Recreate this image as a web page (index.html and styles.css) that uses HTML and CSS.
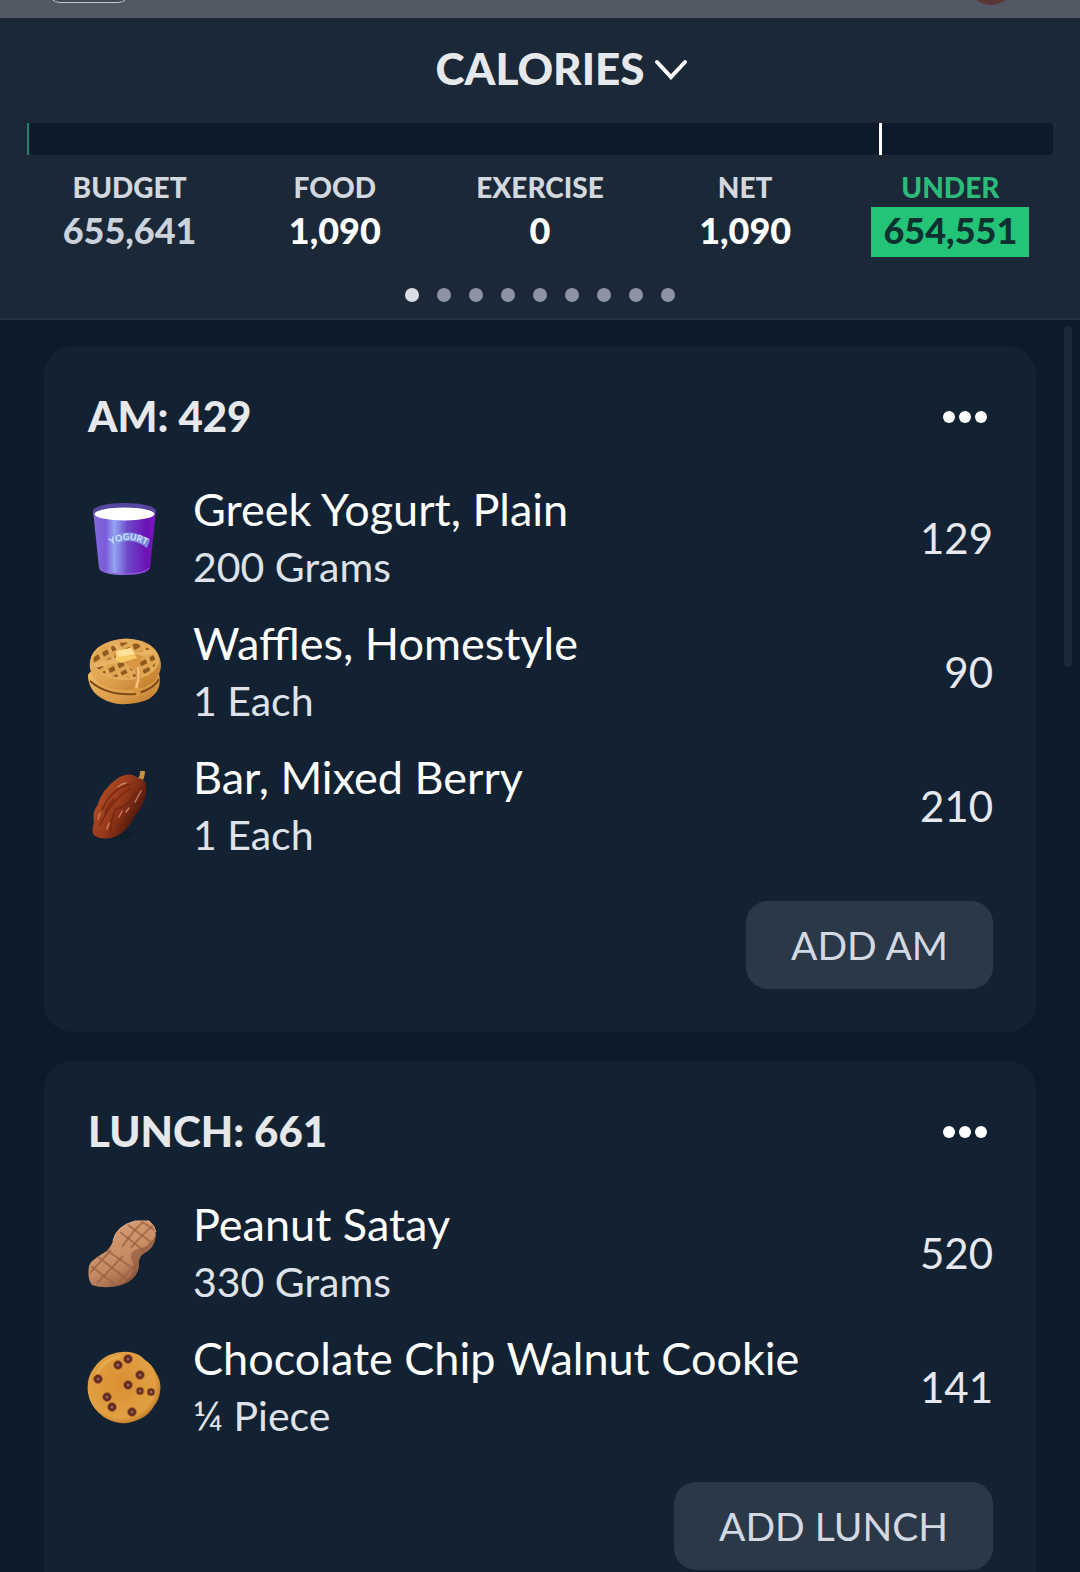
FILE: index.html
```html
<!DOCTYPE html>
<html lang="en">
<head>
    <meta charset="UTF-8">
    <meta name="viewport" content="width=device-width, initial-scale=1.0">
    <title>Calories</title>
    <link rel="stylesheet" href="styles.css">
</head>
<body>
    <div class="topbar">
        <span class="topbar-pill"></span>
        <span class="topbar-avatar"></span>
    </div>

    <header class="summary">
        <h1>
            <button type="button" class="summary-title">
                CALORIES
                <svg class="chevron" viewBox="0 0 34 28" aria-hidden="true">
                    <path d="M3 8 L17 23 L31 8" fill="none" stroke="#fff" stroke-width="4" stroke-linecap="round"/>
                </svg>
            </button>
        </h1>
        <div class="bar">
            <span class="bar-fill"></span>
            <span class="bar-rest"></span>
            <span class="bar-mark"></span>
        </div>
        <dl class="stats">
            <div class="stat budget"><dt>BUDGET</dt><dd>655,641</dd></div>
            <div class="stat"><dt>FOOD</dt><dd>1,090</dd></div>
            <div class="stat"><dt>EXERCISE</dt><dd>0</dd></div>
            <div class="stat"><dt>NET</dt><dd>1,090</dd></div>
            <div class="stat under"><dt>UNDER</dt><dd>654,551</dd></div>
        </dl>
        <nav class="pager" aria-label="Pages">
            <button type="button" class="dot active" aria-label="Page 1"></button>
            <button type="button" class="dot" aria-label="Page 2"></button>
            <button type="button" class="dot" aria-label="Page 3"></button>
            <button type="button" class="dot" aria-label="Page 4"></button>
            <button type="button" class="dot" aria-label="Page 5"></button>
            <button type="button" class="dot" aria-label="Page 6"></button>
            <button type="button" class="dot" aria-label="Page 7"></button>
            <button type="button" class="dot" aria-label="Page 8"></button>
            <button type="button" class="dot" aria-label="Page 9"></button>
        </nav>
    </header>

    <main class="log">
        <span class="scrollbar"></span>

        <section class="card">
            <div class="card-header">
                <h2>AM: 429</h2>
                <button type="button" class="more" aria-label="More options">
                    <svg viewBox="0 0 44 12"><circle cx="6" cy="6" r="6"/><circle cx="22" cy="6" r="6"/><circle cx="38" cy="6" r="6"/></svg>
                </button>
            </div>
            <ul class="foods">
                <li class="food">
                    <!-- yogurt cup -->
                    <svg class="food-icon" viewBox="0 0 74 74" aria-hidden="true">
                        <defs>
                            <linearGradient id="cup" x1="0" x2="1">
                                <stop offset="0" stop-color="#8567dd"/>
                                <stop offset=".2" stop-color="#7a5cd8"/>
                                <stop offset=".34" stop-color="#93a4f2"/>
                                <stop offset=".55" stop-color="#6e48c8"/>
                                <stop offset=".85" stop-color="#6a12b4"/>
                                <stop offset="1" stop-color="#7a18c0"/>
                            </linearGradient>
                        </defs>
                        <path d="M6 8 L12 66 Q14 73 38 73 Q61 73 63 66 L69 8Z" fill="url(#cup)"/>
                        <path d="M13 66 Q18 72 38 72 Q58 72 62 66" fill="none" stroke="#9a5fdc" stroke-width="1"/>
                        <ellipse cx="37.500" cy="9" rx="31.500" ry="8" fill="#5745a0"/>
                        <ellipse cx="37.500" cy="12" rx="30" ry="6.500" fill="#fff"/>
                        <path d="M24 36 Q43 24 63 38 L60 46 Q43 33 27 44Z" fill="#7f9cea" opacity=".85"/>
                        <path id="label" d="M24 43 Q43 32 63 45" fill="none"/>
                        <text class="cup-label"><textPath href="#label">YOGURT</textPath></text>
                    </svg>
                    <div class="food-text">
                        <div class="food-name">Greek Yogurt, Plain</div>
                        <div class="food-amount">200 Grams</div>
                    </div>
                    <div class="food-calories">129</div>
                </li>
                <li class="food">
                    <!-- waffles -->
                    <svg class="food-icon" viewBox="0 0 74 74" aria-hidden="true">
                        <defs>
                            <linearGradient id="waffle" x1="0" y1="0" x2="1" y2="1">
                                <stop offset="0" stop-color="#f0bd69"/>
                                <stop offset=".6" stop-color="#dc9d49"/>
                                <stop offset="1" stop-color="#b97427"/>
                            </linearGradient>
                            <clipPath id="waffle-top"><ellipse cx="38" cy="24" rx="34" ry="20"/></clipPath>
                        </defs>
                        <path d="M1 42 Q0 36 7 35 L72 38 Q76 54 62 63 Q50 69 31 68 Q4 63 1 42Z" fill="url(#waffle)"/>
                        <path d="M3 45 Q20 60 48 58 Q67 53 72 43" fill="none" stroke="#7d4a17" stroke-width="2"/>
                        <path d="M3 25 Q6 11 24 5 Q39 0 55 5 Q72 11 74 28 Q74 44 58 51 Q38 58 16 50 Q1 41 3 25Z" fill="url(#waffle)"/>
                        <g clip-path="url(#waffle-top)">
                            <ellipse cx="38" cy="24" rx="34" ry="20" fill="#8f5a1e"/>
                            <path d="M-2 24 L36 2 M-2 34 L60 -2 M4 40 L74 2 M10 46 L78 11 M22 48 L80 20 M36 50 L82 30" stroke="#dfa553" stroke-width="4"/>
                            <path d="M9 6 L25 48 M18 2 L36 48 M28 0 L47 48 M40 0 L58 46 M51 0 L68 40 M61 4 L76 34" stroke="#e3aa58" stroke-width="4"/>
                            <path d="M2 31 L74 13 M24 2 L58 47" stroke="#e9b365" stroke-width="5"/>
                            <ellipse cx="38" cy="24" rx="33" ry="19" fill="none" stroke="#e6ae5c" stroke-width="3"/>
                        </g>
                        <path d="M25 18 Q39 14 55 20 Q52 28 54 35 Q55 42 52 48 Q51 51 54 57 Q50 64 48 55 Q46 50 49 43 Q50 34 39 28Z" fill="#dc9542"/>
                        <path d="M51 31 Q53 41 49 52" fill="none" stroke="#f7c986" stroke-width="2"/>
                        <path d="M29 15 L44 12 L50 22 L34 27 L29 24Z" fill="#f7c963"/>
                        <path d="M29 15 L44 12 L48 18 L32 21Z" fill="#ffe297"/>
                    </svg>
                    <div class="food-text">
                        <div class="food-name">Waffles, Homestyle</div>
                        <div class="food-amount">1 Each</div>
                    </div>
                    <div class="food-calories">90</div>
                </li>
                <li class="food">
                    <!-- date fruit -->
                    <svg class="food-icon" viewBox="0 0 74 74" aria-hidden="true">
                        <defs>
                            <linearGradient id="date" x1=".1" y1=".2" x2=".9" y2=".7">
                                <stop offset="0" stop-color="#b14f27"/>
                                <stop offset=".5" stop-color="#96391a"/>
                                <stop offset="1" stop-color="#431108"/>
                            </linearGradient>
                        </defs>
                        <ellipse cx="32" cy="65" rx="14" ry="4" fill="#0c1621" opacity=".5"/>
                        <path d="M49 10 Q54 6 53 1 L58 1 Q58 8 54 13Z" fill="#c7923e"/>
                        <path d="M31 8 Q43 1 51 8 Q61 9 59 22 Q57 36 48 46 Q39 63 28 67 Q14 71 7 65 Q4 61 7 52 Q5 42 10 36 Q15 19 31 8Z" fill="url(#date)"/>
                        <path d="M45 14 Q25 17 15 40 M44 18 Q25 29 13 55 M49 22 Q42 36 29 39 Q23 50 24 62 M27 29 Q21 35 18 43" fill="none" stroke="#702410" stroke-width="2" opacity=".7"/>
                        <path d="M54 21 L48 32 M35 41 L32 47 M42 38 L39 42 M22 53 L20 59 M13 43 L11 49 M39 13 Q34 14 31 17" fill="none" stroke="#d98a68" stroke-width="1.500" stroke-linecap="round" opacity=".8"/>
                    </svg>
                    <div class="food-text">
                        <div class="food-name">Bar, Mixed Berry</div>
                        <div class="food-amount">1 Each</div>
                    </div>
                    <div class="food-calories">210</div>
                </li>
            </ul>
            <button type="button" class="add">ADD AM</button>
        </section>

        <section class="card">
            <div class="card-header">
                <h2>LUNCH: 661</h2>
                <button type="button" class="more" aria-label="More options">
                    <svg viewBox="0 0 44 12"><circle cx="6" cy="6" r="6"/><circle cx="22" cy="6" r="6"/><circle cx="38" cy="6" r="6"/></svg>
                </button>
            </div>
            <ul class="foods">
                <li class="food">
                    <!-- peanut -->
                    <svg class="food-icon" viewBox="0 0 74 74" aria-hidden="true">
                        <defs>
                            <linearGradient id="nut" x1=".2" y1="0" x2=".7" y2="1">
                                <stop offset="0" stop-color="#dba47c"/>
                                <stop offset=".6" stop-color="#c58a62"/>
                                <stop offset="1" stop-color="#865039"/>
                            </linearGradient>
                            <clipPath id="nut-shape">
                                <path d="M48 4 L62 4 Q71 11 68 23 Q66 32 56 37 Q51 41 52 49 Q50 62 37 67 Q19 73 5 68 Q0 62 2 49 Q3 44 15 37 Q23 33 26 24 Q29 9 48 4Z"/>
                            </clipPath>
                        </defs>
                        <g clip-path="url(#nut-shape)">
                            <rect width="74" height="74" fill="url(#nut)"/>
                            <path d="M69 14 Q67 29 51 32 Q39 36 47 47 Q47 60 31 70 L65 68 L74 14Z" fill="#7d4a34" opacity=".5"/>
                            <path d="M41 8 L72 31 M33 15 L60 36 M18 32 L51 55 M11 40 L41 63 M4 49 L31 70 M54 4 L72 16" stroke="#9a6244" stroke-width="2" opacity=".75"/>
                            <path d="M56 5 Q45 15 35 30 M66 9 Q55 17 44 31 M69 21 L55 35 M49 47 L28 70 M36 39 L10 66 M24 33 L3 56" fill="none" stroke="#9a6244" stroke-width="2" opacity=".75"/>
                        </g>
                        <path d="M26 24 Q29 9 48 4 L62 4 Q68 9 69 15" fill="none" stroke="#e0aa84" stroke-width="1"/>
                    </svg>
                    <div class="food-text">
                        <div class="food-name">Peanut Satay</div>
                        <div class="food-amount">330 Grams</div>
                    </div>
                    <div class="food-calories">520</div>
                </li>
                <li class="food">
                    <!-- chocolate chip cookie -->
                    <svg class="food-icon" viewBox="0 0 74 74" aria-hidden="true">
                        <defs>
                            <radialGradient id="cookie" cx=".45" cy=".45" r=".56">
                                <stop offset="0" stop-color="#d98f32"/>
                                <stop offset=".85" stop-color="#e1a042"/>
                                <stop offset="1" stop-color="#c47c28"/>
                            </radialGradient>
                        </defs>
                        <path d="M22 4 Q32 0 42 1 Q52 2 58 9 Q65 13 69 22 Q75 31 73 41 Q72 49 67 55 Q62 64 53 68 Q43 73 33 72 Q20 70 12 62 Q3 54 1 42 Q-1 27 7 17 Q13 8 22 4Z" fill="url(#cookie)"/>
                        <path d="M9 25 Q16 8 34 5" fill="none" stroke="#efb75b" stroke-width="3" opacity=".5"/>
                        <g fill="#602b23" stroke="#b9702b" stroke-width="1">
                            <circle cx="31" cy="14" r="4.500"/><circle cx="41" cy="8" r="4.500"/><circle cx="11" cy="28" r="4.500"/>
                            <circle cx="53" cy="24" r="4.500"/><circle cx="41" cy="34" r="4.500"/><circle cx="53" cy="40" r="4"/>
                            <circle cx="64" cy="41" r="4"/><circle cx="20" cy="46" r="4.500"/><circle cx="25" cy="56" r="4.500"/>
                            <circle cx="45" cy="61" r="4.500"/>
                        </g>
                        <g fill="#9c655c">
                            <circle cx="31" cy="14" r="1.500"/><circle cx="41" cy="8" r="1.500"/><circle cx="11" cy="28" r="1.500"/>
                            <circle cx="53" cy="24" r="1.500"/><circle cx="41" cy="34" r="1.500"/><circle cx="53" cy="40" r="1.500"/>
                            <circle cx="64" cy="41" r="1.500"/><circle cx="20" cy="46" r="1.500"/><circle cx="25" cy="56" r="1.500"/>
                            <circle cx="45" cy="61" r="1.500"/>
                        </g>
                    </svg>
                    <div class="food-text">
                        <div class="food-name">Chocolate Chip Walnut Cookie</div>
                        <div class="food-amount">¼ Piece</div>
                    </div>
                    <div class="food-calories">141</div>
                </li>
            </ul>
            <button type="button" class="add">ADD LUNCH</button>
        </section>
    </main>
</body>
</html>
```

FILE: styles.css
```css
* {
    box-sizing: border-box;
}
body {
    display: flex;
    flex-direction: column;
    height: 100vh;
    margin: 0;
    overflow: hidden;
    background-color: #0d1a29;
    color: #fff;
    font-family: Lato, "Liberation Sans", sans-serif;
}
h1, h2, ul, dl, dd {
    margin: 0;
    padding: 0;
}
button {
    padding: 0;
    border: none;
    background: none;
    color: inherit;
    font-family: inherit;
    cursor: pointer;
}

/* bottom edge of the navigation bar */
.topbar {
    display: flex;
    flex-shrink: 0;
    justify-content: space-between;
    align-items: flex-end;
    height: 18px;
    padding: 0 66px 13px 48px;
    overflow: hidden;
    background-color: #525965;
}
.topbar-pill {
    width: 82px;
    height: 40px;
    margin-bottom: 2px;
    border: 1px solid #c5c9d0;
    border-radius: 12px;
    background-color: #424a57;
}
.topbar-avatar {
    width: 46px;
    height: 46px;
    border-radius: 50%;
    background-color: #5b3635;
}

.summary {
    flex-shrink: 0;
    padding: 22px 27px 16px;
    border-bottom: 2px solid #263341;
    background-color: #1a2838;
}
h1 {
    display: flex;
    justify-content: center;
    padding-left: 44px;
}
.summary-title {
    display: flex;
    align-items: center;
    gap: 10px;
    color: #e6e8eb;
    font-size: 44px;
    font-weight: 900;
    line-height: 56px;
}
.chevron {
    width: 34px;
    height: 28px;
}
.bar {
    position: relative;
    display: flex;
    height: 32px;
    margin-top: 27px;
}
.bar-fill {
    width: 2px;
    background-color: #238567;
}
.bar-rest {
    flex: 1;
    border-radius: 4px;
    background-color: #0d1a29;
}
.bar-mark {
    position: absolute;
    left: 83%;
    width: 3px;
    height: 100%;
    background-color: #fff;
}
.stats {
    display: grid;
    grid-template-columns: repeat(5, 1fr);
    margin-top: 16px;
    text-align: center;
}
.stat {
    display: flex;
    flex-direction: column;
    align-items: center;
}
.stat dt {
    color: #d3d7de;
    font-size: 28px;
    font-weight: 900;
    line-height: 32px;
}
.stat dd {
    margin-top: 4px;
    padding: 0 12px 4px;
    font-size: 36px;
    font-weight: 900;
    line-height: 46px;
}
.budget dd {
    color: #ccd2db;
}
.under dt {
    color: #2dbb7a;
}
.under dd {
    background-color: #23c378;
    color: #0d3130;
}
.pager {
    display: flex;
    justify-content: center;
    gap: 18px;
    margin-top: 31px;
}
.dot {
    width: 14px;
    height: 14px;
    border-radius: 50%;
    background-color: #8c94a1;
}
.dot.active {
    background-color: #dadde3;
}

.log {
    position: relative;
    flex: 1;
    min-height: 0;
    padding: 26px 44px;
    overflow: hidden;
}
.scrollbar {
    position: absolute;
    top: 6px;
    right: 8px;
    width: 8px;
    height: 341px;
    border-radius: 4px;
    background-color: #1c2938;
}
.card {
    display: flex;
    flex-direction: column;
    margin-bottom: 29px;
    padding: 44px 43px 43px;
    border-radius: 28px;
    background-color: #132232;
}
.card-header {
    display: flex;
    justify-content: space-between;
    align-items: center;
    height: 54px;
    margin-bottom: 27px;
    padding: 0 6px 0 1px;
}
h2 {
    padding-bottom: 2px;
    color: #e6e8eb;
    font-size: 42px;
    font-weight: 900;
    line-height: 50px;
}
.more svg {
    display: block;
    width: 44px;
    height: 12px;
    fill: #fff;
}
.foods {
    list-style: none;
}
.food {
    display: flex;
    align-items: center;
    height: 134px;
}
.food-icon {
    flex-shrink: 0;
    width: 74px;
    height: 74px;
    margin: 2px 32px 0 0;
}
.cup-label {
    fill: #d6e4ff;
    font-size: 9px;
    font-weight: bold;
}
.food-text {
    flex: 1;
}
.food-name {
    font-size: 45px;
    line-height: 58px;
}
.food-amount {
    color: #dfe3e9;
    font-size: 41px;
    line-height: 58px;
}
.food-calories {
    color: #e6e8ee;
    font-size: 42px;
}
.add {
    align-self: flex-end;
    height: 88px;
    margin-top: 28px;
    padding: 0 45px;
    border-radius: 22px;
    background-color: #2b3848;
    color: #d3d9e2;
    font-size: 39px;
}
```
